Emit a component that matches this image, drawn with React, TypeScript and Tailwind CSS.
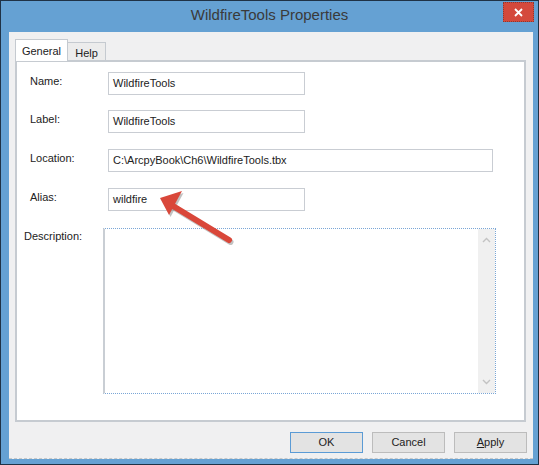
import React from 'react';

const font = { fontFamily: '"Liberation Sans", Arial, sans-serif' };

interface FieldRowProps {
  label: string;
  value: string;
  wide?: boolean;
  className?: string;
}

const FieldRow: React.FC<FieldRowProps> = ({ label, value, wide, className }) => (
  <div className={`flex items-start pl-[13px] ${className || ''}`}>
    <div className="w-[78px] pt-[2px] text-[11px] leading-[14px] text-[#222]">{label}</div>
    <div
      className={`h-[23px] ${wide ? 'w-[385px]' : 'w-[197px]'} border border-[#c9cdd3] bg-white px-[4px] text-[11px] leading-[21px] text-[#222]`}
    >
      {value}
    </div>
  </div>
);

const DialogButton: React.FC<{ label: string; isDefault?: boolean; underline?: boolean }> = ({
  label,
  isDefault,
  underline
}) => (
  <button
    className={`h-[21px] w-[73px] border ${
      isDefault ? 'border-[#5b9bd5]' : 'border-[#bcbcbc]'
    } bg-[#e3e3e3] text-[11px] leading-[19px] text-[#222]`}
  >
    {underline ? (
      <>
        <span className="underline">A</span>
        {label.slice(1)}
      </>
    ) : (
      label
    )}
  </button>
);

export default function App() {
  return (
    <div className="relative h-[465px] w-[539px] border border-[#1f3246] bg-[#65a1d3]" style={font}>
      {/* Заголовок окна */}
      <div className="relative flex h-[31px] items-center justify-center pb-[3px]">
        <span className="text-[15px] text-[#3a3a3a]">WildfireTools Properties</span>
        <div className="absolute right-[4px] top-[1px] flex h-[20px] w-[31px] items-center justify-center border border-dotted border-[#8a3a33] bg-[#d4493c]">
          <svg width="9" height="9" viewBox="0 0 9 9">
            <path d="M1 1L8 8M8 1L1 8" stroke="white" strokeWidth="1.8" />
          </svg>
        </div>
      </div>

      {/* Клиентская область */}
      <div className="ml-[8px] mr-[5px] flex h-[427px] flex-col border-b border-dashed border-[#c8c8c8] bg-[#f0f0f1] px-[6px] pt-[7px]">
        {/* Вкладки */}
        <div className="flex h-[21px] items-end">
          <div className="relative z-10 -mb-px flex h-[22px] w-[53px] items-start justify-center border border-b-0 border-[#c5cad0] bg-white pt-[3px] text-[11px] text-[#222]">
            General
          </div>
          <div className="flex h-[18px] w-[38px] items-start justify-center border border-b-0 border-l-0 border-[#c5cad0] bg-[#ececec] pt-[2px] text-[11px] text-[#222]">
            Help
          </div>
        </div>

        {/* Панель вкладки */}
        <div className="h-[362px] w-[511px] border-2 border-[#c6cbd1] bg-white pt-[10px]">
          <FieldRow label="Name:" value="WildfireTools" />
          <FieldRow label="Label:" value="WildfireTools" className="mt-[15px]" />
          <FieldRow label="Location:" value="C:\ArcpyBook\Ch6\WildfireTools.tbx" wide className="mt-[16px]" />
          <FieldRow label="Alias:" value="wildfire" className="mt-[16px]" />

          <div className="mt-[17px] flex items-start pl-[7px]">
            <div className="w-[79px] pt-[1px] text-[11px] leading-[14px] text-[#222]">Description:</div>
            <div className="flex h-[166px] w-[393px] border border-l-2 border-dotted border-[#7aa6d6] border-l-[#c9ced4] [border-left-style:solid]">
              <div className="flex-1 bg-white" />
              <div className="flex w-[17px] flex-col items-center justify-between bg-[#f0f0f0] py-[8px]">
                <svg width="9" height="6" viewBox="0 0 9 6">
                  <path d="M1 5L4.5 1.5L8 5" fill="none" stroke="#c3c3c3" strokeWidth="1.4" />
                </svg>
                <svg width="9" height="6" viewBox="0 0 9 6">
                  <path d="M1 1L4.5 4.5L8 1" fill="none" stroke="#c3c3c3" strokeWidth="1.4" />
                </svg>
              </div>
            </div>
          </div>
        </div>

        {/* Кнопки */}
        <div className="mt-[10px] flex justify-end gap-[9px]">
          <DialogButton label="OK" isDefault />
          <DialogButton label="Cancel" />
          <DialogButton label="Apply" underline />
        </div>
      </div>

      {/* Стрелка-аннотация */}
      <svg className="pointer-events-none absolute left-0 top-0" width="539" height="465" viewBox="0 0 539 465">
        <g transform="translate(1.5 2)">
          <path d="M228 239L172 205" stroke="#9a9a9a" strokeWidth="6" strokeLinecap="round" opacity="0.6" />
          <path d="M159 197L181 190L168 214Z" fill="#9a9a9a" opacity="0.6" />
        </g>
        <path d="M228 239L172 205" stroke="#d9473a" strokeWidth="6" strokeLinecap="round" />
        <path d="M159 197L181 190L168 214Z" fill="#d9473a" />
      </svg>
    </div>
  );
}
